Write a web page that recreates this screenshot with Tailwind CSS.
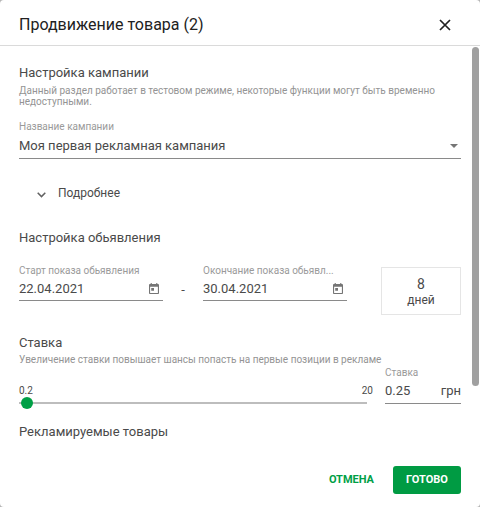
<!DOCTYPE html>
<html lang="ru">
<head>
  <meta charset="UTF-8">
  <meta name="viewport" content="width=device-width, initial-scale=1.0">
  <title>Продвижение товара</title>
  <script src="https://cdn.jsdelivr.net/npm/@tailwindcss/browser@4"></script>
</head>
<body class="bg-[#b5b5b5] font-['Roboto',sans-serif] text-[13px] text-[#4a4a4a]">
  <div role="dialog" aria-labelledby="title" class="flex h-screen flex-col overflow-hidden rounded-[4px] bg-white">
    <!-- Header -->
    <header class="flex items-center justify-between border-b border-[#dadada] pt-3 pr-[27px] pb-2 pl-[19px]">
      <h1 id="title" class="text-[16px] leading-[25px] font-normal text-[#212121]">Продвижение товара (2)</h1>
      <button type="button" aria-label="Закрыть" class="cursor-pointer p-0.5">
        <svg class="size-3" viewBox="0 0 12 12" fill="none" stroke="#212121" stroke-width="1.7"><path d="M1 1l10 10M11 1L1 11"/></svg>
      </button>
    </header>

    <div class="flex min-h-0 flex-1">
      <!-- Form -->
      <form id="promo" class="min-w-0 flex-1 overflow-hidden pt-[19px] pr-[11px] pl-[19px]">
        <h2 class="text-[13px] leading-4">Настройка кампании</h2>
        <p class="mt-1 text-[10px] leading-[11px] text-[#949494]">Данный раздел работает в тестовом режиме, некоторые функции могут быть временно недоступными.</p>

        <label for="campaign" class="mt-[14px] block text-[10px] leading-3 text-[#9a9a9a]">Название кампании</label>
        <div class="relative">
          <select id="campaign" class="h-[26px] w-full appearance-none border-b border-[#8a8a8a]">
            <option>Моя первая рекламная кампания</option>
          </select>
          <svg class="pointer-events-none absolute top-[11px] right-[3px] h-1 w-2" viewBox="0 0 8 4" fill="#757575"><path d="M0 0h8L4 4z"/></svg>
        </div>

        <button type="button" class="mt-[18px] ml-[18px] flex h-8 cursor-pointer items-center gap-3 text-[12px]">
          <svg class="mt-1 h-[6px] w-[9px]" viewBox="0 0 9 6" fill="none" stroke="#616161" stroke-width="1.5"><path d="M.7.8l3.8 3.8L8.3.8"/></svg>
          Подробнее
        </button>

        <h2 class="mt-[21px] text-[13px] leading-4">Настройка обьявления</h2>
        <div class="mt-[19px] flex">
          <div class="min-w-0 flex-1">
            <label for="start" class="block text-[10px] leading-3 text-[#9a9a9a]">Старт показа обьявления</label>
            <div class="flex h-6 items-center border-b border-[#8a8a8a] pr-1">
              <input id="start" type="text" value="22.04.2021" class="w-0 min-w-0 flex-1 outline-none">
              <button type="button" aria-label="Выбрать дату начала" class="cursor-pointer">
                <svg class="h-[11px] w-[10px]" viewBox="3 1 18 20" preserveAspectRatio="none" fill="#757575"><path d="M19 3h-1V1h-2v2H8V1H6v2H5c-1.110 0-1.990.9-1.990 2L3 19c0 1.100.890 2 2 2h14c1.100 0 2-.9 2-2V5c0-1.100-.9-2-2-2zm0 16H5V8h14v11zM7 10h5v5H7z"/></svg>
              </button>
            </div>
          </div>
          <span class="w-10 pt-[17px] text-center leading-4">-</span>
          <div class="min-w-0 flex-1">
            <label for="end" title="Окончание показа обьявления" class="block text-[10px] leading-3 whitespace-nowrap text-[#9a9a9a]">Окончание показа обьявл...</label>
            <div class="flex h-6 items-center border-b border-[#8a8a8a] pr-1">
              <input id="end" type="text" value="30.04.2021" class="w-0 min-w-0 flex-1 outline-none">
              <button type="button" aria-label="Выбрать дату окончания" class="cursor-pointer">
                <svg class="h-[11px] w-[10px]" viewBox="3 1 18 20" preserveAspectRatio="none" fill="#757575"><path d="M19 3h-1V1h-2v2H8V1H6v2H5c-1.110 0-1.990.9-1.990 2L3 19c0 1.100.890 2 2 2h14c1.100 0 2-.9 2-2V5c0-1.100-.9-2-2-2zm0 16H5V8h14v11zM7 10h5v5H7z"/></svg>
              </button>
            </div>
          </div>
          <div class="mt-0.5 ml-[34px] h-12 w-20 border border-[#e5e5e5] pt-2 text-center leading-4">
            <p class="text-[14px]">8</p>
            <p class="text-[12px]">дней</p>
          </div>
        </div>

        <h2 class="mt-5 text-[13px] leading-4">Ставка</h2>
        <p class="mt-[3px] text-[10px] leading-3 text-[#949494]">Увеличение ставки повышает шансы попасть на первые позиции в рекламе</p>
        <!-- Bid slider -->
        <div class="mt-px flex gap-3">
          <div class="min-w-0 flex-1 pt-[18px]">
            <div class="flex justify-between text-[10px] leading-3">
              <span>0.2</span>
              <span>20</span>
            </div>
            <div class="flex pr-[6px]">
              <input type="range" aria-label="Ставка" min="0.2" max="20" step="0.05" value="0.25" class="h-3 w-full appearance-none bg-transparent [&::-webkit-slider-runnable-track]:h-0.5 [&::-webkit-slider-runnable-track]:bg-[#bdbdbd] [&::-webkit-slider-thumb]:relative [&::-webkit-slider-thumb]:left-px [&::-webkit-slider-thumb]:-mt-[5px] [&::-webkit-slider-thumb]:size-3 [&::-webkit-slider-thumb]:appearance-none [&::-webkit-slider-thumb]:rounded-full [&::-webkit-slider-thumb]:bg-[#00a046]">
            </div>
          </div>
          <div class="w-[76px]">
            <label for="bid" class="block text-[10px] leading-3 text-[#9a9a9a]">Ставка</label>
            <div class="flex h-[25px] items-center border-b border-[#8a8a8a]">
              <input id="bid" type="text" value="0.25" class="w-0 min-w-0 flex-1 outline-none">
              <span>грн</span>
            </div>
          </div>
        </div>

        <h2 class="mt-[15px] text-[13px] leading-4">Рекламируемые товары</h2>
      </form>

      <!-- Scrollbar -->
      <div class="w-2 shrink-0 pt-px pr-px">
        <div class="h-5/6 rounded-full bg-[#a0a0a0]"></div>
      </div>
    </div>

    <!-- Actions -->
    <footer class="flex items-center justify-end gap-[19px] pt-3 pr-[19px] pb-[13px] text-[11px] font-bold">
      <button type="button" class="cursor-pointer pt-px text-[#00a046]">ОТМЕНА</button>
      <button type="submit" form="promo" class="h-7 w-[68px] cursor-pointer rounded-[3px] bg-[#009b43] pt-px text-white">ГОТОВО</button>
    </footer>
  </div>
</body>
</html>
